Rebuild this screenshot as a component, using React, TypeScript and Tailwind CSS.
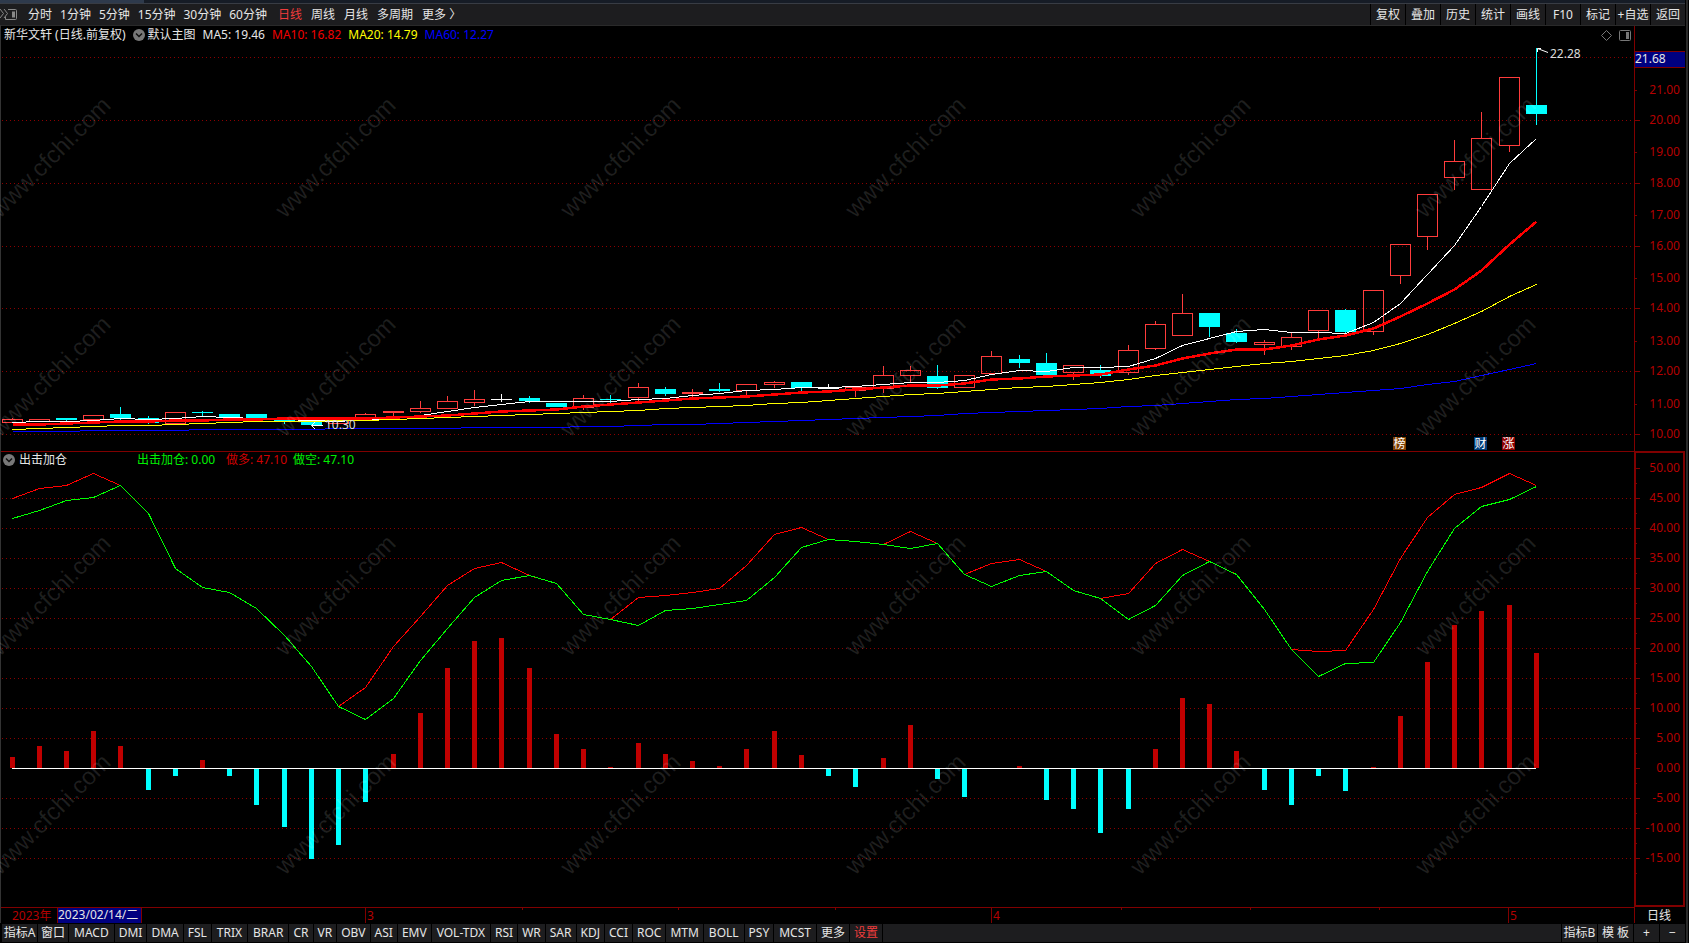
import clsx from 'clsx';

type Candle = [kind: 'up' | 'down' | 'flat', high: number, top: number, bottom: number, low: number];

const STEP = 27.22;
const cx = (i: number) => Math.floor(12 + STEP * i);
const priceY = (price: number) => Math.round(120 + (20 - price) * 31.4) + (price % 2);
const valueY = (value: number) => Math.round(768 - value * 6);

const candles: Candle[] = [
    ['up', 418, 419, 422, 422],
    ['up', 419, 419, 421, 421],
    ['down', 418, 418, 420, 421],
    ['up', 415, 415, 419, 419],
    ['down', 407, 414, 418, 420],
    ['down', 416, 418, 423, 424],
    ['up', 412, 412, 423, 423],
    ['down', 411, 412, 413, 417],
    ['down', 414, 414, 417, 417],
    ['down', 414, 414, 419, 421],
    ['down', 418, 420, 422, 424],
    ['down', 421, 421, 425, 425],
    ['up', 419, 419, 423, 423],
    ['up', 413, 414, 417, 417],
    ['up', 411, 411, 412, 417],
    ['up', 401, 408, 411, 412],
    ['up', 396, 401, 408, 408],
    ['up', 390, 399, 402, 405],
    ['flat', 394, 399, 399, 402],
    ['down', 396, 398, 401, 403],
    ['down', 403, 403, 407, 407],
    ['up', 395, 398, 407, 409],
    ['down', 395, 399, 400, 403],
    ['up', 383, 387, 397, 400],
    ['down', 387, 389, 394, 396],
    ['up', 389, 392, 393, 396],
    ['down', 383, 389, 391, 392],
    ['up', 384, 384, 390, 394],
    ['up', 381, 382, 384, 387],
    ['down', 382, 382, 388, 391],
    ['flat', 384, 388, 388, 389],
    ['up', 387, 387, 390, 396],
    ['up', 366, 375, 388, 392],
    ['up', 366, 370, 375, 382],
    ['down', 365, 376, 388, 389],
    ['up', 375, 375, 387, 387],
    ['up', 351, 356, 373, 373],
    ['down', 355, 359, 363, 368],
    ['down', 353, 363, 375, 375],
    ['up', 365, 365, 372, 379],
    ['down', 365, 370, 376, 378],
    ['up', 345, 350, 372, 374],
    ['up', 321, 324, 348, 349],
    ['up', 294, 313, 335, 335],
    ['down', 313, 313, 327, 337],
    ['down', 329, 333, 342, 343],
    ['up', 340, 342, 344, 354],
    ['up', 333, 337, 346, 349],
    ['up', 310, 310, 330, 337],
    ['down', 309, 310, 332, 333],
    ['up', 290, 290, 331, 334],
    ['up', 244, 244, 275, 283],
    ['up', 194, 194, 236, 249],
    ['up', 140, 161, 177, 189],
    ['up', 112, 138, 189, 189],
    ['up', 77, 77, 145, 151],
    ['down', 48, 105, 114, 125],
];

const ma5 = [
    422, 421, 421, 420, 418, 419, 418, 416, 417, 418, 419, 420, 421, 419, 418, 415, 411, 407, 404, 401, 401, 401, 401, 399,
    398, 395, 393, 390, 389, 387, 387, 386, 384, 382, 382, 380, 374, 370, 371, 367, 367, 366, 358, 345, 338, 331, 329, 332,
    332, 333, 322, 303, 274, 245, 206, 163, 138,
];
const ma10 = [
    424, 424, 423, 422, 421, 421, 420, 420, 419, 419, 418, 418, 418, 418, 417, 416, 415, 413, 411, 410, 409, 406, 404, 402,
    400, 398, 397, 396, 394, 392, 391, 389, 387, 385, 385, 383, 379, 378, 376, 375, 374, 369, 365, 358, 353, 349, 349, 345,
    339, 335, 328, 316, 303, 289, 270, 244, 221,
];
const ma20 = [
    429, 428, 427, 426, 425, 425, 424, 423, 422, 421, 421, 421, 420, 420, 419, 418, 417, 416, 415, 414, 413, 412, 411, 410,
    408, 407, 406, 405, 403, 402, 400, 398, 396, 394, 393, 391, 389, 387, 386, 384, 382, 379, 375, 372, 369, 366, 363, 361,
    358, 355, 350, 343, 334, 323, 311, 296, 284,
];
const ma60 = [
    431, 431, 431, 430, 430, 430, 430, 429, 429, 429, 429, 429, 428, 428, 428, 428, 428, 427, 427, 427, 427, 426, 426, 425,
    424, 424, 423, 422, 421, 420, 419, 418, 417, 416, 415, 413, 412, 411, 410, 409, 408, 406, 405, 403, 401, 399, 398, 396,
    394, 392, 390, 388, 384, 381, 375, 369, 363,
];

const shortLine = [
    41.7, 43, 44.6, 45.2, 47.2, 42.5, 33.3, 30.2, 29.3, 26.7, 22.2, 17, 10.3, 8.2, 11.6, 18, 23.3, 28.5, 31.3, 32.2, 30.8,
    25.7, 24.8, 23.8, 26.4, 26.7, 27.3, 28, 31.8, 36.9, 38.2, 37.8, 37.3, 36.7, 37.5, 32.3, 30.3, 32.2, 32.8, 29.7, 28.3,
    24.8, 27.1, 32.2, 34.5, 32.4, 26.5, 19.9, 15.3, 17.5, 17.7, 24.4, 32.8, 40, 43.7, 44.8, 47,
];
const longLine = [
    45, 46.7, 47.2, 49.2, 47.2, 42.5, 33.3, 30.2, 29.3, 26.7, 22.2, 17, 10.3, 13.5, 20.3, 25.3, 30.5, 33.3, 34.3, 32.2,
    30.8, 25.7, 24.8, 28.5, 28.8, 29.3, 30, 33.8, 39, 40.2, 38.2, 37.8, 37.3, 39.5, 37.5, 32.3, 34.2, 34.8, 32.8, 29.7,
    28.3, 29.2, 34.2, 36.5, 34.5, 32.4, 26.5, 19.9, 19.5, 19.7, 26.5, 35, 41.9, 45.7, 46.8, 49.2, 47.2,
];
const bars = [
    1.9, 3.6, 2.9, 6.1, 3.7, -3.6, -1.3, 1.4, -1.3, -6.1, -9.9, -15.1, -12.8, -5.6, 2.4, 9.2, 16.7, 21.1, 21.7, 16.7, 5.7,
    3.1, 0.2, 4.2, 2.4, 1.1, 0.4, 3.1, 6.1, 2.2, -1.4, -3.1, 1.6, 7.2, -1.8, -4.9, -0.2, 0.4, -5.3, -6.9, -10.9, -6.8,
    3.2, 11.7, 10.6, 2.9, -3.6, -6.1, -1.4, -3.9, 0.2, 8.7, 17.7, 23.9, 26.2, 27.1, 19.2,
];

const minutes = ['分时', '1分钟', '5分钟', '15分钟', '30分钟', '60分钟'];
const periods = ['日线', '周线', '月线', '多周期', '更多 〉'];
const tools = ['复权', '叠加', '历史', '统计', '画线', 'F10', '标记', '+自选', '返回'];
const indicators = [
    'MACD', 'DMI', 'DMA', 'FSL', 'TRIX', 'BRAR', 'CR', 'VR', 'OBV', 'ASI', 'EMV', 'VOL-TDX', 'RSI', 'WR', 'SAR', 'KDJ',
    'CCI', 'ROC', 'MTM', 'BOLL', 'PSY', 'MCST', '更多', '设置',
];

function points(ys: number[]) {
    return ys.map((y, i) => `${cx(i) + 0.5},${y + 0.5}`).join(' ');
}

function Watermarks({ rows }: { rows: number[] }) {
    return (
        <g fill="#fff" fillOpacity={0.12} fontSize={24} fontFamily="Liberation Sans, sans-serif">
            {rows.map((y) =>
                [0, 285, 570, 855, 1140, 1425].map((x) => (
                    <text key={x} transform={`translate(${x} ${y}) rotate(-45)`}>
                        www.cfchi.com
                    </text>
                ))
            )}
        </g>
    );
}

function CandleMark({ candle, x }: { candle: Candle; x: number }) {
    const [kind, high, top, bottom, low] = candle;
    if (kind === 'up') {
        return (
            <g stroke="#ff3c3c" fill="none">
                {high < top && <path d={`M${x + 0.5} ${high}V${top}`} />}
                <rect x={x - 9.5} y={top + 0.5} width={20} height={bottom - top} />
                {low > bottom && <path d={`M${x + 0.5} ${bottom}V${low + 1}`} />}
            </g>
        );
    }
    const color = kind === 'flat' ? '#fff' : '#0ff';
    return (
        <g fill={color}>
            <rect x={x} y={high} width={1} height={Math.max(low - high, 1)} />
            <rect x={x - 10} y={top} width={21} height={Math.max(bottom - top, 1)} />
        </g>
    );
}

function PriceChart() {
    return (
        <svg viewBox="0 25 1685 426" className="block h-auto w-full [grid-area:1/1]" fontSize={12}>
            <g shapeRendering="crispEdges">
                {[22, 20, 18, 16, 14, 12, 10].map((p) => (
                    <path key={p} d={`M2 ${priceY(p) + 0.5}H1634`} stroke="#8c0000" strokeDasharray="1 3" />
                ))}
                {candles.map((c, i) => (
                    <CandleMark key={i} candle={c} x={cx(i)} />
                ))}
                <g fill="none">
                    <polyline points={points(ma5)} stroke="#fff" />
                    <polyline points={points(ma20)} stroke="#ff0" />
                    <polyline points={points(ma60)} stroke="#00f" />
                    <polyline points={points(ma10)} stroke="#f00" strokeWidth={2.5} />
                </g>
                <path d="M1634.5 25V451" stroke="#800000" />
                {[21, 20, 19, 18, 17, 16, 15, 14, 13, 12, 11, 10].map((p) => (
                    <path key={p} d={`M1635 ${priceY(p) + 0.5}h${p % 2 ? 2 : 5}`} stroke="#800000" />
                ))}
                <path d="M0 25.5H1685" stroke="#2a2a2a" />
                <path d="M0.5 25V451" stroke="#333" />
                <rect x={1635} y={51} width={50} height={17} fill="#000080" />
                <path d="M1635 51.5h50M1635 67.5h50" stroke="#800000" />
            </g>
            <text x={1635} y={63} fill="#e6e6e6">
                21.68
            </text>
            <g fill="#b40000" textAnchor="end">
                {[21, 20, 19, 18, 17, 16, 15, 14, 13, 12, 11, 10].map((p) => (
                    <text key={p} x={1680} y={priceY(p) + 4}>
                        {p.toFixed(2)}
                    </text>
                ))}
            </g>
            <g stroke="#fff" fill="none">
                <path d="M1548 52.5 1537.5 48.5M1537.5 52V48.5H1541" />
                <path d="M323 425.5H311.5M315 422l-3.5 3.5 3.5 3.5" />
            </g>
            <g fill="#dcdcdc">
                <text x={1550} y={58}>
                    22.28
                </text>
                <text x={325} y={429}>
                    10.30
                </text>
            </g>
            {[
                { x: 1393, fill: '#804000', label: '榜' },
                { x: 1474, fill: '#003c78', label: '财' },
                { x: 1502, fill: '#8c0000', label: '涨' },
            ].map((badge) => (
                <g key={badge.label}>
                    <rect x={badge.x} y={437} width={13} height={13} fill={badge.fill} />
                    <text x={badge.x + 6.5} y={448} fill="#fff" textAnchor="middle">
                        {badge.label}
                    </text>
                </g>
            ))}
            <Watermarks rows={[219, 438]} />
            <g fill="none" stroke="#777">
                <path d="M1606.5 30.5l5 5-5 5-5-5z" />
                <rect x={1619.5} y={30.5} width={11} height={10} rx={1} />
                <path d="M1627.5 32v7" strokeWidth={3} />
            </g>
        </svg>
    );
}

function IndicatorChart() {
    const labels = [50, 45, 40, 35, 30, 25, 20, 15, 10, 5, 0, -5, -10, -15];
    return (
        <svg viewBox="0 451 1685 472" className="block h-auto w-full [grid-area:1/1]" fontSize={12}>
            <g shapeRendering="crispEdges">
                {labels
                    .filter((v) => v !== 50 && v !== 0)
                    .map((v) => (
                        <path key={v} d={`M2 ${valueY(v) + 0.5}H1634`} stroke="#8c0000" strokeDasharray="1 3" />
                    ))}
                {bars.map((v, i) => (
                    <rect
                        key={i}
                        x={cx(i) - 2}
                        y={v > 0 ? valueY(v) : 768}
                        width={5}
                        height={Math.max(Math.abs(valueY(v) - 768), 1)}
                        fill={v > 0 ? '#c00000' : '#0ff'}
                    />
                ))}
                <path d="M12 768.5H1536" stroke="#fff" />
                <polyline points={points(longLine.map(valueY))} stroke="#f00" fill="none" />
                <polyline points={points(shortLine.map(valueY))} stroke="#0f0" fill="none" />
                <path d="M0.5 451V923" stroke="#333" />
                <path d="M1 451.5H1634M1 907.5H1634M1634.5 907V923" stroke="#800000" />
                <rect x={1635} y={452} width={49} height={454} fill="none" stroke="#800000" strokeWidth={2} />
                {labels.map((v) => (
                    <path key={v} d={`M1636 ${valueY(v) + 0.5}h4M1636 ${valueY(v) + 15.5}h1`} stroke="#800000" />
                ))}
                <path d="M365.5 908v15M991.5 908v15M1508.5 908v15" stroke="#800000" />
                {[522, 678, 835, 1121, 1250, 1379].map((x) => (
                    <path key={x} d={`M${x + 0.5} 908v2`} stroke="#800000" />
                ))}
                <rect x={57} y={908} width={85} height={15} fill="#000080" />
                <path d="M57.5 908v15M141.5 908v15" stroke="#800000" />
            </g>
            <g fill="#b40000" textAnchor="end">
                {labels.map((v) => (
                    <text key={v} x={1680} y={valueY(v) + 4}>
                        {v.toFixed(2)}
                    </text>
                ))}
            </g>
            <g fill="#b40000">
                <text x={12} y={920}>
                    2023年
                </text>
                <text x={367} y={920}>
                    3
                </text>
                <text x={993} y={920}>
                    4
                </text>
                <text x={1510} y={920}>
                    5
                </text>
            </g>
            <text x={58} y={919} fill="#e6e6e6">
                2023/02/14/二
            </text>
            <text x={1659} y={920} fill="#e6e6e6" textAnchor="middle">
                日线
            </text>
            <Watermarks rows={[657, 876]} />
        </svg>
    );
}

function CollapseButton() {
    return (
        <button aria-label="collapse">
            <svg viewBox="0 0 12 12" className="size-3">
                <circle cx={6} cy={6} r={6} fill="#787878" />
                <path d="M3 4.5l3 3 3-3" fill="none" stroke="#111" strokeWidth={1.5} />
            </svg>
        </button>
    );
}

function TopBar() {
    return (
        <header className="flex h-[21px] items-stretch whitespace-nowrap bg-[#1d1d1f]">
            <svg viewBox="0 0 28 21" className="h-[21px] w-7" fill="none" stroke="#888">
                <path d="M0 5l3.5 4.5L0 14M4 5l3.5 4.5L4 14" />
                <path d="M8 5.5h7.5a1 1 0 0 1 1 1v8a1 1 0 0 1-1 1h-10v-3" />
                <path d="M13.5 7.5v6" strokeWidth={3} />
            </svg>
            <nav className="flex gap-2">
                {minutes.map((label) => (
                    <button key={label}>{label}</button>
                ))}
            </nav>
            <nav className="ml-[11px] flex gap-[9px]">
                {periods.map((label) => (
                    <button key={label} className={clsx(label === '日线' && 'text-[#f03c3c]')}>
                        {label}
                    </button>
                ))}
            </nav>
            <div className="ml-auto flex gap-px bg-black pl-px">
                {tools.map((label) => (
                    <button key={label} className="w-[34px] bg-[#1d1d1f]">
                        {label}
                    </button>
                ))}
            </div>
        </header>
    );
}

function BottomBar() {
    return (
        <footer className="mt-px flex h-[18px] gap-px whitespace-nowrap pl-0.5">
            <button className="w-[35px] bg-[#1d1d1f]">指标A</button>
            <button className="w-[30px] bg-[#1d1d1f]">窗口</button>
            {indicators.map((label) => (
                <button
                    key={label}
                    className={clsx(
                        'bg-[#1d1d1f]',
                        label.length > 3 ? 'px-[5px]' : 'px-1',
                        label === '设置' && 'text-[#f03c3c]'
                    )}>
                    {label}
                </button>
            ))}
            <div className="flex-1 bg-[#1d1d1f]" />
            <button className="w-[35px] bg-[#1d1d1f]">指标B</button>
            <button className="w-[35px] bg-[#1d1d1f]">模 板</button>
            <button className="w-[25px] bg-[#1d1d1f]">+</button>
            <button className="w-[25px] bg-[#1d1d1f]">−</button>
        </footer>
    );
}

export default function App() {
    return (
        <div className="flex min-h-screen bg-black font-['Noto_Sans','Noto_Sans_CJK_SC',sans-serif] text-xs leading-4 text-[#e6e6e6]">
            <div className="min-w-0 flex-1">
                <div className="h-1 border-b border-[#383c44] bg-[#161c26]">
                    <div className="h-full w-36 bg-[#2e3a4c]" />
                </div>
                <TopBar />
                <main>
                    <section className="grid">
                        <PriceChart />
                        <div className="z-10 flex h-5 items-center gap-[7px] self-start pl-1 whitespace-nowrap [grid-area:1/1]">
                            <h1>新华文轩 (日线.前复权)</h1>
                            <CollapseButton />
                            <span className="-ml-1">默认主图</span>
                            <span>MA5: 19.46</span>
                            <span className="text-[#f00000]">MA10: 16.82</span>
                            <span className="text-[#ffff00]">MA20: 14.79</span>
                            <span className="text-[#0000ff]">MA60: 12.27</span>
                        </div>
                    </section>
                    <section className="grid">
                        <IndicatorChart />
                        <div className="z-10 flex h-[18px] items-center gap-1 self-start pl-[3px] whitespace-nowrap [grid-area:1/1]">
                            <CollapseButton />
                            <h2 className="w-[114px]">出击加仓</h2>
                            <span className="w-[85px] text-[#00f000]">出击加仓: 0.00</span>
                            <span className="w-[63px] text-[#d00000]">做多: 47.10</span>
                            <span className="text-[#00f000]">做空: 47.10</span>
                        </div>
                    </section>
                </main>
                <BottomBar />
            </div>
            <div className="w-1 border-x border-black bg-[#2b2b2b]" />
        </div>
    );
}
